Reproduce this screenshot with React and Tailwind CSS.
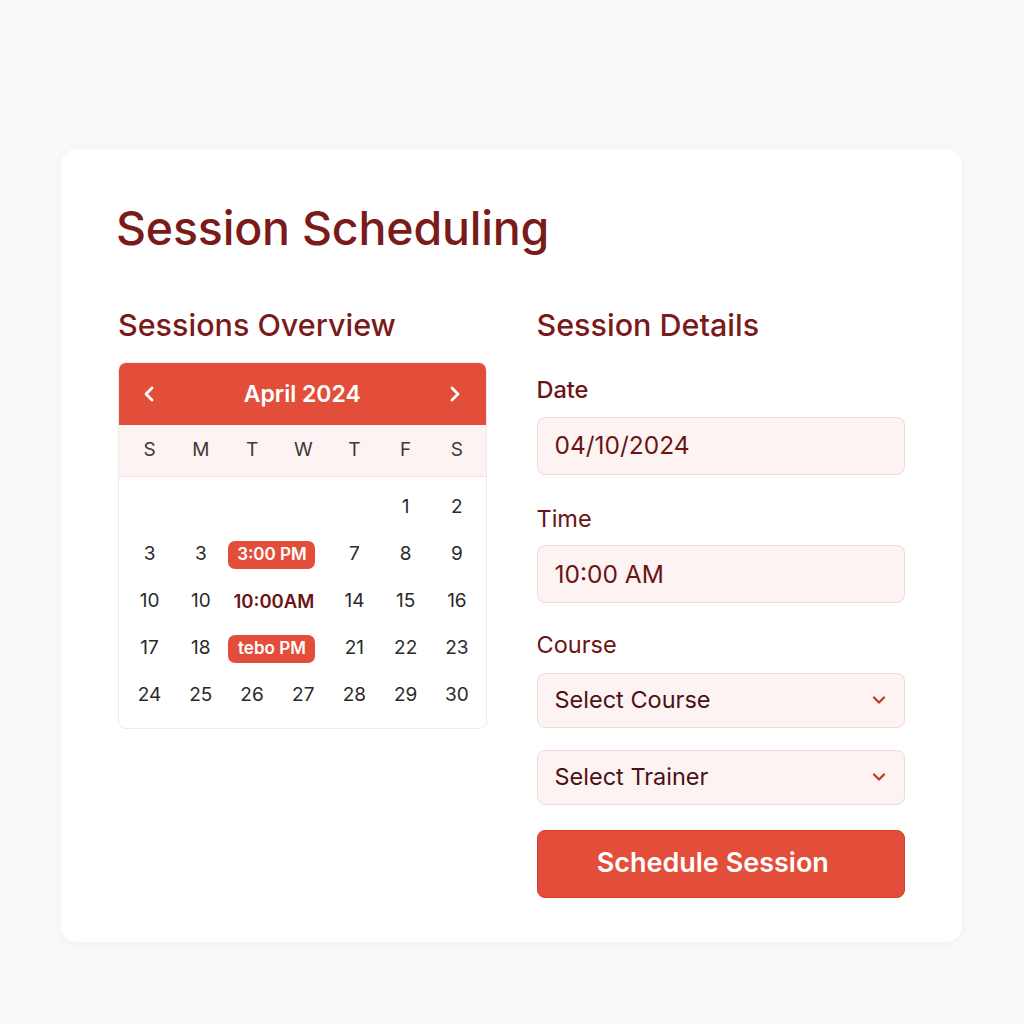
import { ChevronLeft, ChevronRight, ChevronDown } from 'lucide-react';

const days = ['S', 'M', 'T', 'W', 'T', 'F', 'S'];

const rows = [
  ['', '', '', '', '', '1', '2'],
  ['3', '3', { badge: '3:00 PM' }, '7', '8', '9'],
  ['10', '10', { text: '10:00AM' }, '14', '15', '16'],
  ['17', '18', { badge: 'tebo PM' }, '21', '22', '23'],
  ['24', '25', '26', '27', '28', '29', '30'],
];

const Cell = ({ v }) => {
  if (typeof v === 'object') {
    return (
      <div className="col-span-2 flex items-center pl-[2px]">
        {v.badge ? (
          <span className="w-[87px] h-[28px] flex items-center justify-center rounded-[7px] bg-[#e34e3a] text-white font-semibold text-[17px] whitespace-nowrap">{v.badge}</span>
        ) : (
          <span className="w-[87px] pl-[4px] text-center font-semibold text-[18.5px] text-[#6b1414] whitespace-nowrap">{v.text}</span>
        )}
      </div>
    );
  }
  return <div className="flex items-center justify-center text-[19px] text-[#2a2a2a]">{v}</div>;
};

const Field = ({ label, value, bold }) => (
  <div className="flex flex-col">
    <label className={`text-[23.5px] text-[#6b1414] mb-[15px] leading-none ${bold ? 'font-medium' : ''}`}>{label}</label>
    <div className="h-[58px] rounded-[8px] bg-[#fdf3f2] border border-[#f3d9d6] flex items-center px-[17px] text-[24.5px] text-[#6b1414]">{value}</div>
  </div>
);

const Select = ({ value }) => (
  <div className="h-[55px] rounded-[8px] bg-[#fdf3f2] border border-[#f3d9d6] flex items-center justify-between pl-[17px] pr-[15px] text-[23.5px] text-[#4a1212]">
    <span>{value}</span>
    <ChevronDown size={20} strokeWidth={2.75} className="text-[#c0392b]" />
  </div>
);

export default function App() {
  return (
    <div className="min-h-screen bg-[#f9f9f9] pt-[149px] px-[61px] font-['Inter',sans-serif]">
      <div className="w-[901px] h-[793px] bg-white rounded-[16px] shadow-[0_2px_12px_rgba(0,0,0,0.04)] pt-[56px] px-[57px]">
        <h1 className="text-[46.5px] font-medium text-[#7a1a1a] leading-none tracking-[-0.2px] -ml-[2px]">Session Scheduling</h1>
        <div className="flex gap-[50px] mt-[58px]">
          <div className="w-[369px]">
            <h2 className="text-[30.5px] font-medium text-[#7a1a1a] leading-none mb-[22px]">Sessions Overview</h2>
            <div className="rounded-[8px] border border-[#ececec] overflow-hidden">
              <div className="h-[62px] bg-[#e34e3a] flex items-center justify-between px-[18px] text-white">
                <ChevronLeft size={24} strokeWidth={2.75} />
                <span className="text-[23px] font-semibold">April 2024</span>
                <ChevronRight size={24} strokeWidth={2.75} />
              </div>
              <div className="h-[52px] bg-[#fdf3f2] border-b border-[#f3e3e1] grid grid-cols-7 pl-[5px] pr-[3px] items-center text-[19px] text-[#3a3a3a]">
                {days.map((d, i) => (
                  <div key={i} className="text-center">{d}</div>
                ))}
              </div>
              <div className="grid grid-cols-7 pl-[5px] pr-[3px] pt-[7px] pb-[9px] auto-rows-[47px]">
                {rows.map((r, ri) => r.map((v, ci) => <Cell key={ri + '-' + ci} v={v} />))}
              </div>
            </div>
          </div>
          <div className="w-[369px]">
            <h2 className="text-[30.5px] font-medium text-[#7a1a1a] leading-none mb-[38px]">Session Details</h2>
            <div className="flex flex-col gap-[32px]">
              <Field label="Date" value="04/10/2024" bold />
              <Field label="Time" value="10:00 AM" />
            </div>
            <div className="mt-[30px]">
              <label className="block text-[23.5px] text-[#6b1414] mb-[16px] leading-none">Course</label>
              <div className="flex flex-col gap-[22px]">
                <Select value="Select Course" />
                <Select value="Select Trainer" />
              </div>
            </div>
            <button className="mt-[25px] w-full h-[68px] rounded-[8px] bg-[#e34e3a] border border-[#d2402d] text-white text-[27px] font-semibold pr-[16px]">Schedule Session</button>
          </div>
        </div>
      </div>
    </div>
  );
}
